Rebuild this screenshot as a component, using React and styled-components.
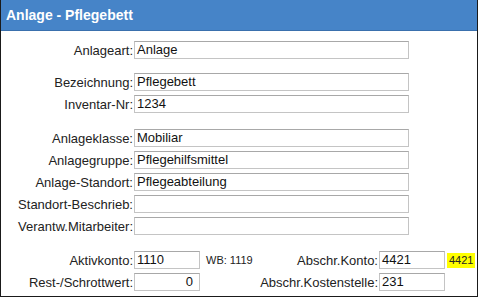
import React from "react";
import styled, { createGlobalStyle } from "styled-components";

const Global = createGlobalStyle`
  html, body { margin: 0; padding: 0; background: #ffffff; }
  body { font-family: "Liberation Sans", Arial, sans-serif; }
`;

const Frame = styled.div`
  width: 478px;
  height: 297px;
  box-sizing: border-box;
  border-left: 1px solid #1a1a1a;
  border-right: 1px solid #1a1a1a;
  border-bottom: 1px solid #1a1a1a;
  background: #ffffff;
  display: flex;
  flex-direction: column;
  overflow: hidden;
`;

const Header = styled.div`
  height: 31px;
  box-sizing: border-box;
  background: #4684c8;
  border-bottom: 1px solid #3a70ad;
  display: flex;
  align-items: center;
  padding: 0 0 1px 5px;
  color: #ffffff;
  font-size: 14px;
  font-weight: bold;
`;

const Body = styled.div`
  display: flex;
  flex-direction: column;
  padding-top: 10px;
`;

const Group = styled.div`
  display: flex;
  flex-direction: column;
  gap: 4px;
  margin-bottom: ${(p) => p.$after || 0}px;
`;

const Row = styled.div`
  display: grid;
  grid-template-columns: 132px 275px;
  column-gap: 1px;
  align-items: center;
  height: 18px;
`;

const Label = styled.div`
  font-size: 13px;
  color: #222222;
  text-align: right;
  white-space: nowrap;
  justify-self: ${(p) => (p.$start ? "start" : "end")};
`;

const Field = styled.div`
  height: 18px;
  box-sizing: border-box;
  border: 1px solid #c4c4c4;
  border-top-color: #a8a8a8;
  background: #ffffff;
  font-size: 13px;
  color: #111111;
  line-height: 16px;
  padding: 0 ${(p) => (p.$right ? "6px" : "2px")} 0 2px;
  text-align: ${(p) => (p.$right ? "right" : "left")};
  white-space: nowrap;
  overflow: hidden;
`;

const BottomRow = styled.div`
  display: grid;
  grid-template-columns: 132px 66px 1fr auto 66px 31px;
  column-gap: 1px;
  align-items: center;
  height: 18px;
`;

const Small = styled.div`
  font-size: 11px;
  color: #222222;
  padding-left: 5px;
  white-space: nowrap;
`;

const Mark = styled.div`
  justify-self: start;
  margin-left: 1px;
  font-size: 11px;
  color: #222222;
  background: #ffff00;
  padding: 1px 2px;
  line-height: 13px;
`;

const fields1 = [["Anlageart:", "Anlage"]];
const fields2 = [
  ["Bezeichnung:", "Pflegebett"],
  ["Inventar-Nr:", "1234"],
];
const fields3 = [
  ["Anlageklasse:", "Mobiliar"],
  ["Anlagegruppe:", "Pflegehilfsmittel"],
  ["Anlage-Standort:", "Pflegeabteilung"],
  ["Standort-Beschrieb:", ""],
  ["Verantw.Mitarbeiter:", ""],
];

const renderRows = (list) =>
  list.map(([l, v]) => (
    <Row key={l}>
      <Label>{l}</Label>
      <Field>{v}</Field>
    </Row>
  ));

export default function App() {
  return (
    <>
      <Global />
      <Frame>
        <Header>Anlage - Pflegebett</Header>
        <Body>
          <Group $after={14}>{renderRows(fields1)}</Group>
          <Group $after={16}>{renderRows(fields2)}</Group>
          <Group $after={16}>{renderRows(fields3)}</Group>
          <Group>
            <BottomRow>
              <Label>Aktivkonto:</Label>
              <Field>1110</Field>
              <Small>WB: 1119</Small>
              <Label>Abschr.Konto:</Label>
              <Field>4421</Field>
              <Mark>4421</Mark>
            </BottomRow>
            <BottomRow>
              <Label>Rest-/Schrottwert:</Label>
              <Field $right>0</Field>
              <span />
              <Label>Abschr.Kostenstelle:</Label>
              <Field>231</Field>
              <span />
            </BottomRow>
          </Group>
        </Body>
      </Frame>
    </>
  );
}
